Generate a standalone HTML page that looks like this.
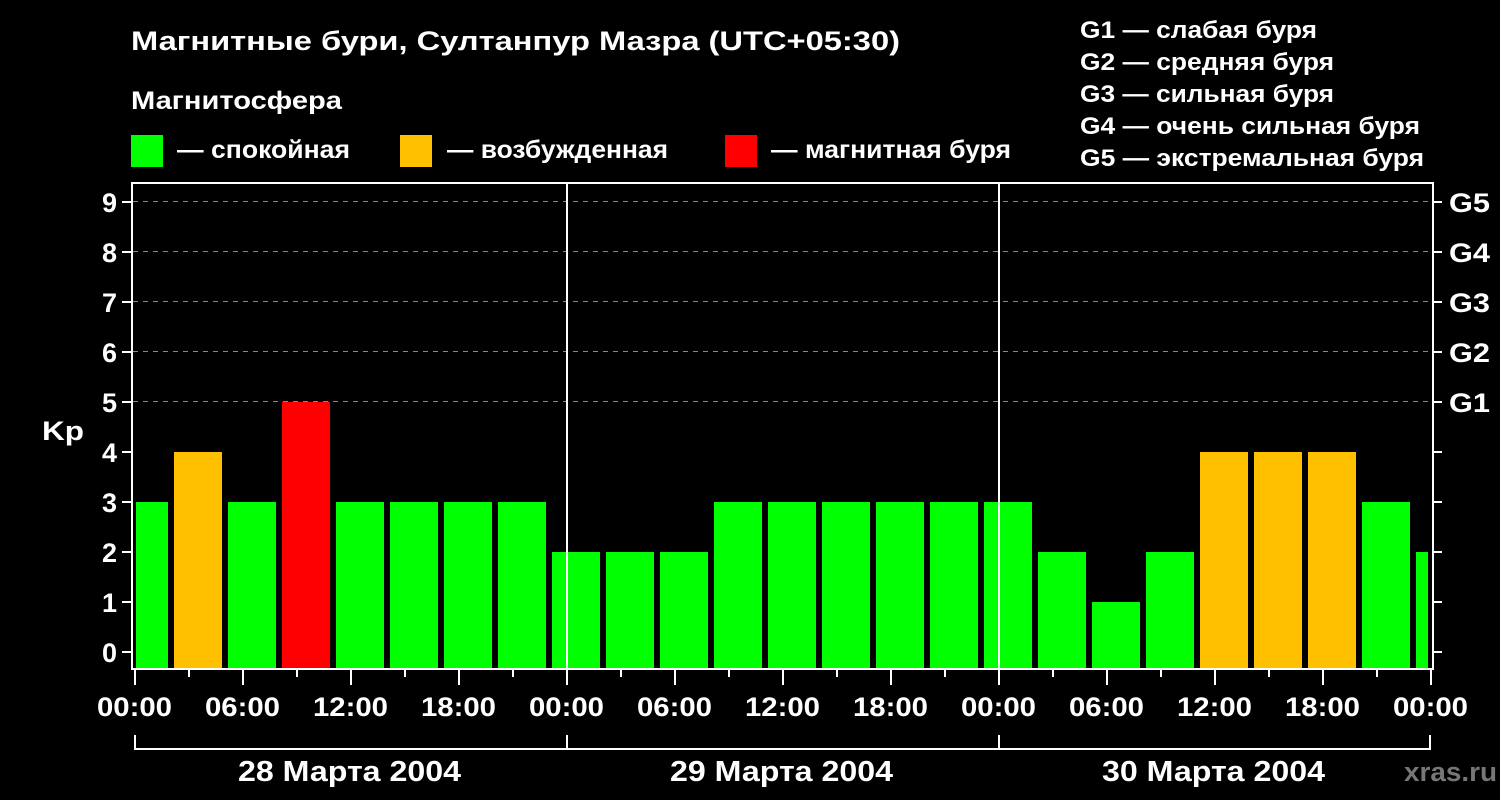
<!DOCTYPE html>
<html><head><meta charset="utf-8"><style>
html,body{margin:0;padding:0;background:#000}
svg{display:block}
text{font-family:"Liberation Sans",sans-serif;font-weight:bold;fill:#fff}
</style></head><body>
<svg width="1500" height="800" viewBox="0 0 1500 800" xmlns="http://www.w3.org/2000/svg">
<rect width="1500" height="800" fill="#000"/>
<text x="131" y="50" font-size="27" textLength="769" lengthAdjust="spacingAndGlyphs">Магнитные бури, Султанпур Мазра (UTC+05:30)</text>
<text x="131" y="109" font-size="25" textLength="211" lengthAdjust="spacingAndGlyphs">Магнитосфера</text>
<rect x="131" y="135" width="32" height="32" fill="#00ff00"/>
<text x="177" y="158" font-size="25" textLength="173" lengthAdjust="spacingAndGlyphs">— спокойная</text>
<rect x="400" y="135" width="32" height="32" fill="#ffc000"/>
<text x="447" y="158" font-size="25" textLength="221" lengthAdjust="spacingAndGlyphs">— возбужденная</text>
<rect x="725" y="135" width="32" height="32" fill="#ff0000"/>
<text x="771" y="158" font-size="25" textLength="240" lengthAdjust="spacingAndGlyphs">— магнитная буря</text>
<g font-size="24">
<text x="1080" y="38" textLength="237" lengthAdjust="spacingAndGlyphs">G1 — слабая буря</text>
<text x="1080" y="70" textLength="254" lengthAdjust="spacingAndGlyphs">G2 — средняя буря</text>
<text x="1080" y="102" textLength="254" lengthAdjust="spacingAndGlyphs">G3 — сильная буря</text>
<text x="1080" y="134" textLength="340" lengthAdjust="spacingAndGlyphs">G4 — очень сильная буря</text>
<text x="1080" y="166" textLength="344" lengthAdjust="spacingAndGlyphs">G5 — экстремальная буря</text>
</g>
<g stroke="#888" stroke-width="1" stroke-dasharray="5,5">
<line x1="133" y1="201.5" x2="1432" y2="201.5"/>
<line x1="133" y1="251.5" x2="1432" y2="251.5"/>
<line x1="133" y1="301.5" x2="1432" y2="301.5"/>
<line x1="133" y1="351.5" x2="1432" y2="351.5"/>
<line x1="133" y1="401.5" x2="1432" y2="401.5"/>
</g>
<g>
<rect x="136" y="502" width="32" height="166" fill="#00ff00"/>
<rect x="174" y="452" width="48" height="216" fill="#ffc000"/>
<rect x="228" y="502" width="48" height="166" fill="#00ff00"/>
<rect x="282" y="402" width="48" height="266" fill="#ff0000"/>
<rect x="336" y="502" width="48" height="166" fill="#00ff00"/>
<rect x="390" y="502" width="48" height="166" fill="#00ff00"/>
<rect x="444" y="502" width="48" height="166" fill="#00ff00"/>
<rect x="498" y="502" width="48" height="166" fill="#00ff00"/>
<rect x="552" y="552" width="48" height="116" fill="#00ff00"/>
<rect x="606" y="552" width="48" height="116" fill="#00ff00"/>
<rect x="660" y="552" width="48" height="116" fill="#00ff00"/>
<rect x="714" y="502" width="48" height="166" fill="#00ff00"/>
<rect x="768" y="502" width="48" height="166" fill="#00ff00"/>
<rect x="822" y="502" width="48" height="166" fill="#00ff00"/>
<rect x="876" y="502" width="48" height="166" fill="#00ff00"/>
<rect x="930" y="502" width="48" height="166" fill="#00ff00"/>
<rect x="984" y="502" width="48" height="166" fill="#00ff00"/>
<rect x="1038" y="552" width="48" height="116" fill="#00ff00"/>
<rect x="1092" y="602" width="48" height="66" fill="#00ff00"/>
<rect x="1146" y="552" width="48" height="116" fill="#00ff00"/>
<rect x="1200" y="452" width="48" height="216" fill="#ffc000"/>
<rect x="1254" y="452" width="48" height="216" fill="#ffc000"/>
<rect x="1308" y="452" width="48" height="216" fill="#ffc000"/>
<rect x="1362" y="502" width="48" height="166" fill="#00ff00"/>
<rect x="1416" y="552" width="12" height="116" fill="#00ff00"/>
</g>
<g stroke="#fff" stroke-width="2" fill="none">
<rect x="132" y="183" width="1301" height="486"/>
<line x1="567" y1="183" x2="567" y2="669"/>
<line x1="999" y1="183" x2="999" y2="669"/>
<polyline points="135,735 135,749 1430,749 1430,735"/>
<line x1="567" y1="735" x2="567" y2="749"/>
<line x1="999" y1="735" x2="999" y2="749"/>
</g>
<g stroke="#fff" stroke-width="2">
<line x1="122" y1="652" x2="132" y2="652"/><line x1="122" y1="602" x2="132" y2="602"/>
<line x1="122" y1="552" x2="132" y2="552"/><line x1="122" y1="502" x2="132" y2="502"/>
<line x1="122" y1="452" x2="132" y2="452"/><line x1="122" y1="402" x2="132" y2="402"/>
<line x1="122" y1="352" x2="132" y2="352"/><line x1="122" y1="302" x2="132" y2="302"/>
<line x1="122" y1="252" x2="132" y2="252"/><line x1="122" y1="202" x2="132" y2="202"/>
<line x1="1433" y1="652" x2="1442" y2="652"/><line x1="1433" y1="602" x2="1442" y2="602"/>
<line x1="1433" y1="552" x2="1442" y2="552"/><line x1="1433" y1="502" x2="1442" y2="502"/>
<line x1="1433" y1="452" x2="1442" y2="452"/><line x1="1433" y1="402" x2="1442" y2="402"/>
<line x1="1433" y1="352" x2="1442" y2="352"/><line x1="1433" y1="302" x2="1442" y2="302"/>
<line x1="1433" y1="252" x2="1442" y2="252"/><line x1="1433" y1="202" x2="1442" y2="202"/>
<line x1="135" y1="669" x2="135" y2="685"/><line x1="189" y1="669" x2="189" y2="677"/>
<line x1="243" y1="669" x2="243" y2="685"/><line x1="297" y1="669" x2="297" y2="677"/>
<line x1="351" y1="669" x2="351" y2="685"/><line x1="405" y1="669" x2="405" y2="677"/>
<line x1="459" y1="669" x2="459" y2="685"/><line x1="513" y1="669" x2="513" y2="677"/>
<line x1="567" y1="669" x2="567" y2="685"/><line x1="621" y1="669" x2="621" y2="677"/>
<line x1="675" y1="669" x2="675" y2="685"/><line x1="729" y1="669" x2="729" y2="677"/>
<line x1="783" y1="669" x2="783" y2="685"/><line x1="837" y1="669" x2="837" y2="677"/>
<line x1="891" y1="669" x2="891" y2="685"/><line x1="945" y1="669" x2="945" y2="677"/>
<line x1="999" y1="669" x2="999" y2="685"/><line x1="1053" y1="669" x2="1053" y2="677"/>
<line x1="1107" y1="669" x2="1107" y2="685"/><line x1="1161" y1="669" x2="1161" y2="677"/>
<line x1="1215" y1="669" x2="1215" y2="685"/><line x1="1269" y1="669" x2="1269" y2="677"/>
<line x1="1323" y1="669" x2="1323" y2="685"/><line x1="1377" y1="669" x2="1377" y2="677"/>
<line x1="1431" y1="669" x2="1431" y2="685"/>
</g>
<g font-size="27" text-anchor="end">
<text x="117" y="662">0</text><text x="117" y="612">1</text><text x="117" y="562">2</text>
<text x="117" y="512">3</text><text x="117" y="462">4</text><text x="117" y="412">5</text>
<text x="117" y="362">6</text><text x="117" y="312">7</text><text x="117" y="262">8</text>
<text x="117" y="212">9</text>
</g>
<text x="42" y="440" font-size="27" textLength="42" lengthAdjust="spacingAndGlyphs">Kp</text>
<g font-size="27">
<text x="1449" y="412" textLength="41" lengthAdjust="spacingAndGlyphs">G1</text>
<text x="1449" y="362" textLength="41" lengthAdjust="spacingAndGlyphs">G2</text>
<text x="1449" y="312" textLength="41" lengthAdjust="spacingAndGlyphs">G3</text>
<text x="1449" y="262" textLength="41" lengthAdjust="spacingAndGlyphs">G4</text>
<text x="1449" y="212" textLength="41" lengthAdjust="spacingAndGlyphs">G5</text>
</g>
<g font-size="27">
<text x="97" y="716" textLength="75" lengthAdjust="spacingAndGlyphs">00:00</text>
<text x="205" y="716" textLength="75" lengthAdjust="spacingAndGlyphs">06:00</text>
<text x="313" y="716" textLength="75" lengthAdjust="spacingAndGlyphs">12:00</text>
<text x="421" y="716" textLength="75" lengthAdjust="spacingAndGlyphs">18:00</text>
<text x="529" y="716" textLength="75" lengthAdjust="spacingAndGlyphs">00:00</text>
<text x="637" y="716" textLength="75" lengthAdjust="spacingAndGlyphs">06:00</text>
<text x="745" y="716" textLength="75" lengthAdjust="spacingAndGlyphs">12:00</text>
<text x="853" y="716" textLength="75" lengthAdjust="spacingAndGlyphs">18:00</text>
<text x="961" y="716" textLength="75" lengthAdjust="spacingAndGlyphs">00:00</text>
<text x="1069" y="716" textLength="75" lengthAdjust="spacingAndGlyphs">06:00</text>
<text x="1177" y="716" textLength="75" lengthAdjust="spacingAndGlyphs">12:00</text>
<text x="1285" y="716" textLength="75" lengthAdjust="spacingAndGlyphs">18:00</text>
<text x="1393" y="716" textLength="75" lengthAdjust="spacingAndGlyphs">00:00</text>
</g>
<g font-size="29">
<text x="238" y="781" textLength="223" lengthAdjust="spacingAndGlyphs">28 Марта 2004</text>
<text x="670" y="781" textLength="223" lengthAdjust="spacingAndGlyphs">29 Марта 2004</text>
<text x="1102" y="781" textLength="223" lengthAdjust="spacingAndGlyphs">30 Марта 2004</text>
</g>
<text x="1404" y="781" font-size="27" textLength="93" lengthAdjust="spacingAndGlyphs" style="fill:#777">xras.ru</text>
</svg>
</body></html>
